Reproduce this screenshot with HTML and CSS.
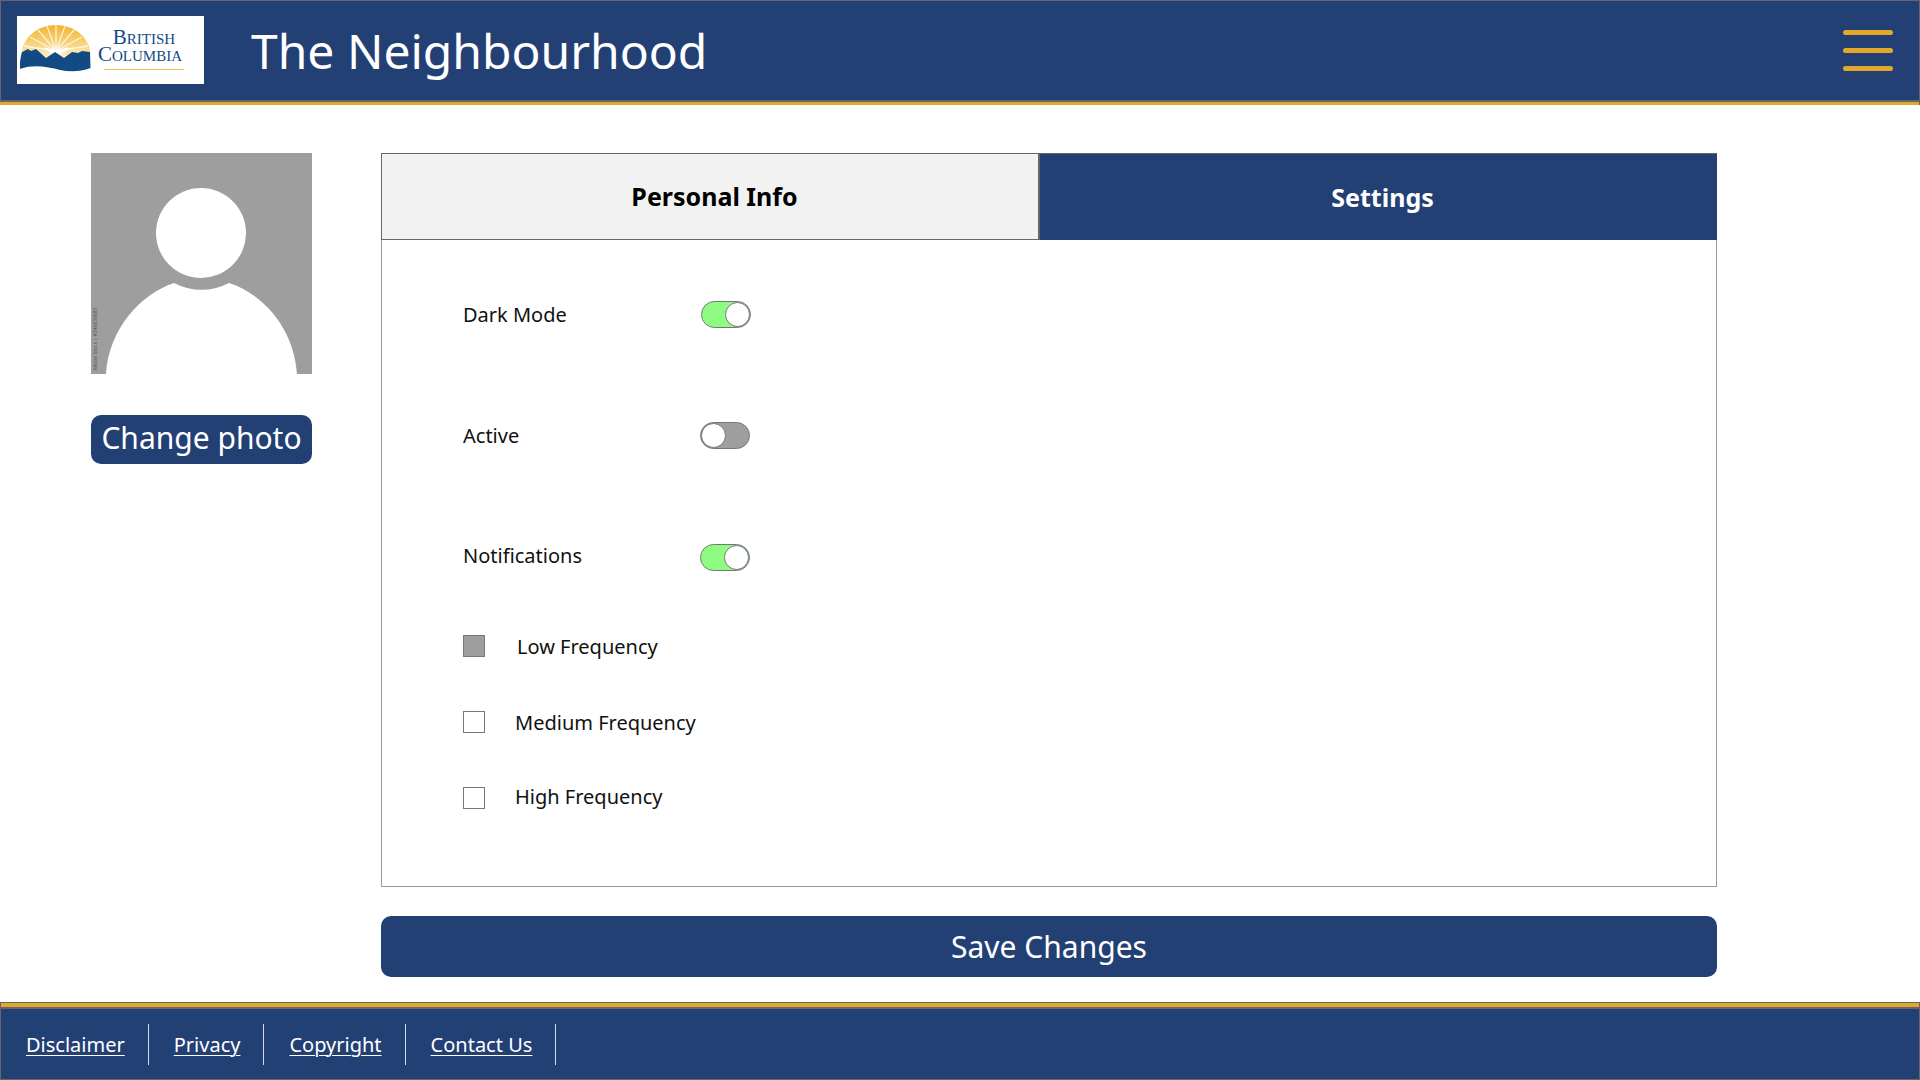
FILE: index.html
```html
<!DOCTYPE html>
<html lang="en">
<head>
<meta charset="utf-8">
<title>The Neighbourhood</title>
<link rel="stylesheet" href="styles.css">
</head>
<body>
<header class="site-header">
  <div class="logo">
    <svg class="logo-mark" viewBox="0 0 72 50" width="72" height="50" aria-hidden="true">
      <defs>
        <linearGradient id="sun" x1="0" y1="0" x2="0" y2="1">
          <stop offset="0" stop-color="#f2b433"/>
          <stop offset="0.6" stop-color="#f8d98a"/>
          <stop offset="1" stop-color="#fff8e6"/>
        </linearGradient>
        <clipPath id="dome"><path d="M2 34 A34 34 0 0 1 71 30 L71 38 L2 38 Z"/></clipPath>
      </defs>
      <path d="M1 31 C2 12 18 0 36 0 C54 0 69 12 70.500 28 L70 36 L2 36 Z" fill="url(#sun)"/>
      <g clip-path="url(#dome)" stroke="#fff" stroke-width="1.300" opacity="0.75">
        <path d="M36 26 L36 0 M36 26 L27 1 M36 26 L45 1 M36 26 L18 5 M36 26 L54 5 M36 26 L10 12 M36 26 L62 12 M36 26 L4 21 M36 26 L68 21"/>
      </g>
      <path d="M36 25 C29 25 27 22 24 23 L36 32 L50 23 C46 21 42 25 36 25 Z" fill="#fff"/>
      <path d="M0 39 C0 34 1 31 2 27 L8 24 L11 26 L16 24 L26 33 L35 27 L44 33 L52 27 L58 28 L62 26 L70 27 L70.500 43 C60 47 50 47 40 45 C28 42 14 39 0 44 Z" fill="#124a83"/>
    </svg>
    <div class="logo-text">
      <span class="logo-line logo-first"><span class="logo-cap">B</span>RITISH</span>
      <span class="logo-line"><span class="logo-cap">C</span>OLUMBIA</span>
      <span class="logo-rule"></span>
    </div>
  </div>
  <h1 class="site-title">The Neighbourhood</h1>
  <button class="menu-button" aria-label="Menu"><span></span><span></span><span></span></button>
</header>
<div class="gold-bar"></div>

<main class="content">
  <aside class="profile">
    <svg class="avatar" viewBox="0 0 221 221" width="221" height="221" role="img" aria-label="Profile photo">
      <rect width="221" height="221" fill="#9e9e9e"/>
      <circle cx="110" cy="80" r="45" fill="#fff"/>
      <path d="M15 221 C18 175 50 141 83 130 A59 59 0 0 0 138 130 C172 141 203 175 206 221 Z" fill="#fff"/>
      <text class="avatar-credit" transform="translate(6 218) rotate(-90)">Adobe Stock | #346839683</text>
    </svg>
    <button class="photo-button">Change photo</button>
  </aside>

  <section class="editor">
    <div class="panel">
      <div class="tabs">
        <div class="tab tab-light">Personal Info</div>
        <div class="tab tab-dark">Settings</div>
      </div>
      <div class="settings">
        <div class="setting setting-dark">
          <span class="setting-label">Dark Mode</span>
          <span class="toggle toggle-on toggle-first"><span class="knob"></span></span>
        </div>
        <div class="setting setting-active">
          <span class="setting-label">Active</span>
          <span class="toggle"><span class="knob"></span></span>
        </div>
        <div class="setting setting-notify">
          <span class="setting-label label-raised">Notifications</span>
          <span class="toggle toggle-on"><span class="knob"></span></span>
        </div>
        <div class="check check-low">
          <span class="box box-filled"></span><span class="check-label label-low">Low Frequency</span>
        </div>
        <div class="check check-medium">
          <span class="box"></span><span class="check-label">Medium Frequency</span>
        </div>
        <div class="check check-high">
          <span class="box"></span><span class="check-label label-high">High Frequency</span>
        </div>
      </div>
    </div>
    <button class="save-button">Save Changes</button>
  </section>
</main>

<footer class="site-footer">
  <div class="footer-gold"></div>
  <nav class="footer-nav">
    <a href="#" class="footer-link">Disclaimer</a>
    <a href="#" class="footer-link">Privacy</a>
    <a href="#" class="footer-link">Copyright</a>
    <a href="#" class="footer-link">Contact Us</a>
  </nav>
</footer>
</body>
</html>
```

FILE: styles.css
```css
* { box-sizing: border-box; }

html, body { height: 100%; }

body {
  margin: 0;
  height: 1080px;
  display: flex;
  flex-direction: column;
  background: #fff;
  color: #111;
  font-family: "Noto Sans", "Open Sans", sans-serif;
  overflow: hidden;
}

button {
  font-family: inherit;
  border: 0;
  cursor: pointer;
}

/* Header */
.site-header {
  height: 102px;
  flex: none;
  display: flex;
  align-items: center;
  padding: 0 26px 0 16px;
  background: #234075;
  border: 1px solid #666;
  border-bottom-width: 2px;
}

.logo {
  width: 187px;
  height: 68px;
  flex: none;
  margin-top: -2px;
  display: flex;
  align-items: center;
  gap: 4px;
  padding: 0 3px;
  background: #fff;
}

.logo-mark { flex: none; }

.logo-text {
  position: relative;
  flex: none;
  display: flex;
  flex-direction: column;
  align-items: center;
  color: #124a83;
  font-family: "Liberation Serif", serif;
  font-size: 15px;
  line-height: 15px;
  white-space: nowrap;
}

.logo-first { margin-left: 8px; }

.logo-cap { font-size: 21px; }

.logo-line { height: 17px; }

.logo-rule {
  display: block;
  width: 80px;
  height: 1px;
  margin: 5px 0 0 8px;
  background: #f0c14b;
}

.site-title {
  flex: 1;
  margin: 0 0 0 47px;
  color: #fff;
  font-size: 48px;
  font-weight: 400;
  line-height: 1;
  white-space: nowrap;
}

.menu-button {
  width: 50px;
  display: flex;
  flex-direction: column;
  gap: 13px;
  padding: 0;
  margin-top: -1px;
  background: none;
}

.menu-button span {
  display: block;
  width: 50px;
  height: 5px;
  border-radius: 3px;
  background: #e3a82b;
}

.gold-bar {
  height: 3px;
  flex: none;
  background: #e3a82b;
  border-right: 1px solid #666;
}

/* Main */
.content {
  flex: 1;
  display: flex;
  align-items: flex-start;
  gap: 69px;
  padding: 48px 0 0 91px;
}

.profile {
  width: 221px;
  flex: none;
  display: flex;
  flex-direction: column;
  gap: 41px;
}

.avatar { display: block; }

.avatar-credit {
  font-size: 5px;
  fill: #555;
}

.photo-button {
  height: 49px;
  padding: 0 0 3px;
  color: #fff;
  font-size: 30px;
  line-height: 1;
  background: #234075;
  border-radius: 10px;
  white-space: nowrap;
}

.editor {
  width: 1336px;
  flex: none;
  display: flex;
  flex-direction: column;
  gap: 29px;
}

.panel {
  height: 734px;
  border: 1px solid #9a9a9a;
  border-top: 0;
}

.tabs {
  height: 87px;
  margin: 0 -1px;
  display: flex;
}

.tab {
  display: flex;
  align-items: center;
  justify-content: center;
  font-size: 25px;
  font-weight: 700;
  padding-bottom: 1px;
}

.tab-light {
  width: 658px;
  padding-left: 9px;
  background: #f2f2f2;
  border: 1px solid #666;
  color: #000;
}

.tab-dark {
  flex: 1;
  padding-left: 8px;
  background: #234075;
  border-left: 1px solid #666;
  border-top: 1px solid #666;
  color: #fff;
}

/* Settings */
.settings {
  display: flex;
  flex-direction: column;
  padding-left: 81px;
}

.setting {
  display: flex;
  align-items: center;
  height: 27px;
}

.setting-dark { margin-top: 61px; }
.setting-active { margin-top: 94px; }
.setting-notify { margin-top: 95px; }

.setting-label {
  width: 237px;
  font-size: 20px;
  line-height: 27px;
}

.label-raised { margin-top: -5px; }

.toggle {
  position: relative;
  width: 50px;
  height: 27px;
  display: block;
  flex: none;
  background: #9e9e9e;
  border: 1px solid #777;
  border-radius: 14px;
}

.toggle-first { margin-left: 1px; }

.toggle-on { background: #8dfc80; }

.knob {
  position: absolute;
  top: 0;
  left: 0;
  width: 25px;
  height: 25px;
  background: #fff;
  border: 1px solid #777;
  border-radius: 50%;
}

.toggle-on .knob {
  left: auto;
  right: 0;
}

.check {
  display: flex;
  align-items: center;
  height: 22px;
}

.check-low { margin-top: 64px; }
.check-medium { margin-top: 54px; }
.check-high { margin-top: 54px; }

.box {
  width: 22px;
  height: 22px;
  flex: none;
  background: #fff;
  border: 1px solid #777;
}

.box-filled { background: #9e9e9e; }

.check-label {
  margin-left: 30px;
  font-size: 20px;
  line-height: 27px;
  white-space: nowrap;
}

.label-low { margin-left: 32px; }
.label-high { margin-top: -3px; }

.save-button {
  height: 61px;
  color: #fff;
  font-size: 30px;
  background: #234075;
  border-radius: 10px;
}

/* Footer */
.site-footer {
  flex: none;
  height: 78px;
  display: flex;
  flex-direction: column;
  background: #234075;
  border: 1px solid #666;
  border-top-width: 1px;
}

.footer-gold {
  height: 4px;
  flex: none;
  background: #e3a82b;
  border-bottom: 0;
  box-shadow: 0 1px 0 #666, 0 2px 0 #666;
}

.footer-nav {
  flex: 1;
  display: flex;
  align-items: center;
  padding-left: 25px;
  padding-top: 2px;
}

.footer-link {
  height: 41px;
  display: flex;
  align-items: center;
  padding-right: 23px;
  margin-right: 25px;
  color: #fff;
  font-size: 20px;
  line-height: 41px;
  text-decoration: underline;
  text-decoration-thickness: 1px;
  text-underline-offset: 3px;
  border-right: 1px solid #d5dbe6;
  white-space: nowrap;
}
```
